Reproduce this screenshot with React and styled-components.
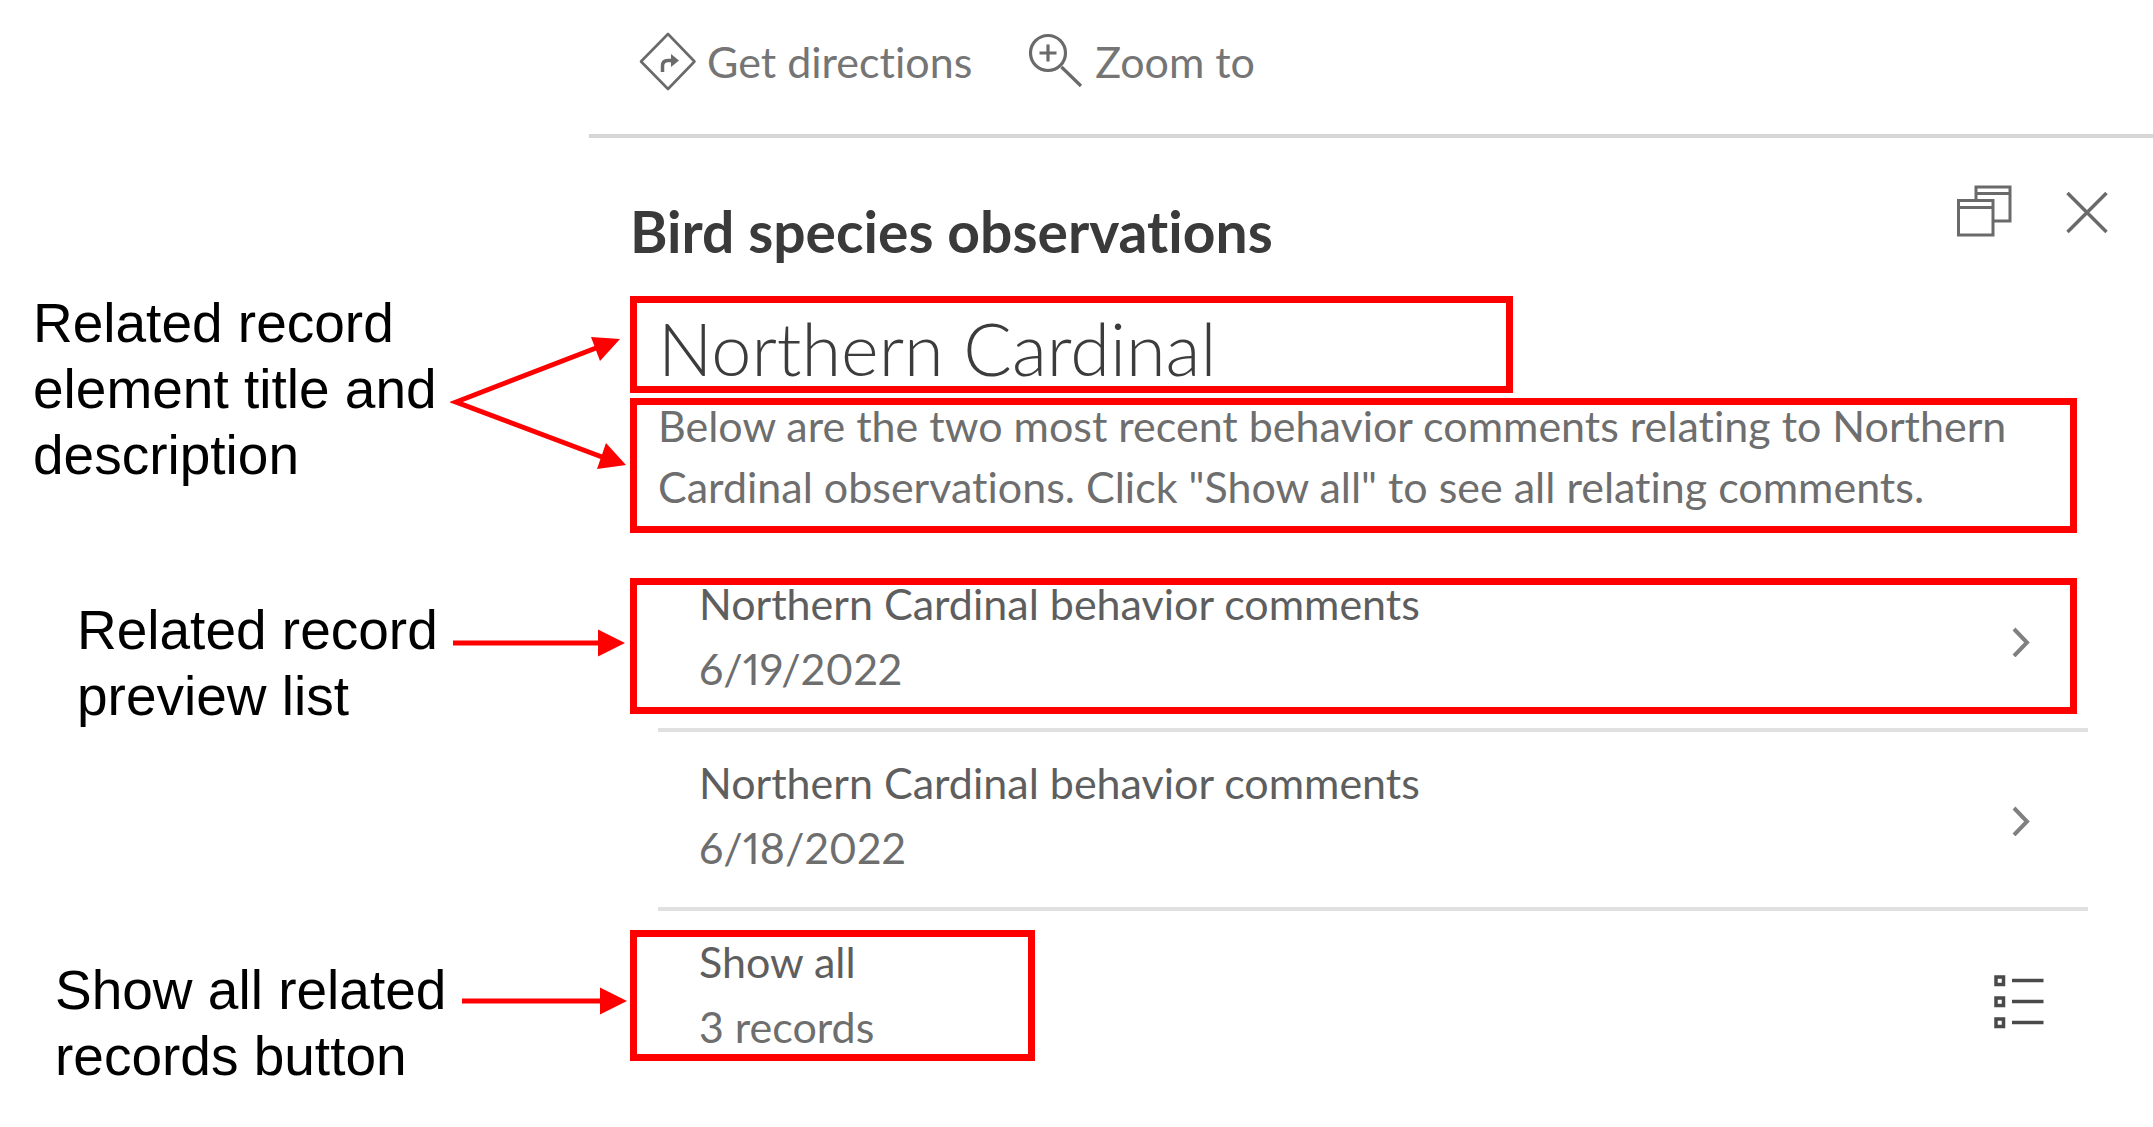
import React from 'react';
import styled, { createGlobalStyle } from 'styled-components';

const GlobalStyle = createGlobalStyle`
  * {
    box-sizing: border-box;
  }

  body {
    margin: 0;
    background: #fff;
    font-family: Lato, 'Open Sans', sans-serif;
    font-variant-ligatures: none;
  }

  h1, h2, p, ul {
    margin: 0;
    padding: 0;
  }

  svg {
    display: block;
    flex: none;
  }
`;

const Page = styled.div`
  display: grid;
  grid-template-columns: 589px 1fr;
`;

/* Callouts on the left */

const Notes = styled.aside`
  display: grid;
  grid-template-rows: 290px 307px 360px auto;
  font-family: 'Liberation Sans', Arial, sans-serif;
  font-size: 55px;
  line-height: 66px;
  color: #000;
`;

const Note = styled.div`
  position: relative;
  padding-left: ${({ $indent }) => $indent}px;
  white-space: nowrap;
`;

const Arrow = styled.svg`
  position: absolute;
  left: 450px;
  top: 1px;
  fill: #f00;
  stroke: #f00;
`;

/* Panel */

const Panel = styled.main`
  min-width: 0;
`;

const Toolbar = styled.div`
  display: flex;
  gap: 57px;
  height: 138px;
  padding: 31px 0 0 50px;
  border-bottom: 4px solid #d6d6d6;
`;

const ToolButton = styled.button`
  display: flex;
  align-items: center;
  gap: 10px;
  height: 60px;
  padding: 0;
  border: 0;
  background: none;
  font-family: inherit;
  font-variant-ligatures: inherit;
  font-size: 43px;
  color: #757575;
  white-space: nowrap;
`;

const Content = styled.div`
  padding: 0 76px 0 41px;
`;

const Header = styled.header`
  display: flex;
  justify-content: space-between;
  height: 158px;
`;

const Title = styled.h1`
  padding-top: 60px;
  font-size: 57px;
  line-height: 66px;
  font-weight: 700;
  color: #3a3a3a;
`;

const HeaderActions = styled.div`
  display: flex;
  align-items: flex-start;
  gap: 54px;
  padding-top: 46px;
  margin-right: -31px;
`;

const IconButton = styled.button`
  padding: 0;
  border: 0;
  background: none;
  color: #6a6a6a;
`;

const TitleFrame = styled.div`
  width: 61%;
  height: 97px;
  padding-left: 21px;
  border: 7px solid #f00;
`;

const ElementTitle = styled.h2`
  font-size: 72px;
  line-height: 90px;
  font-weight: 300;
  color: #3c3c3c;
`;

const TextFrame = styled.div`
  height: 135px;
  margin-top: 5px;
  padding-left: 21px;
  border: 7px solid #f00;
`;

const Description = styled.p`
  font-size: 43px;
  line-height: 61px;
  margin-top: -10px;
  color: #6e6e6e;
`;

const Records = styled.ul`
  list-style: none;
  margin: 20px -11px 0 28px;
`;

const RecordItem = styled.li`
  position: relative;
  border-bottom: ${({ $last }) => ($last ? '0' : '4px solid #e0e0e0')};
`;

const RecordButton = styled.button`
  display: flex;
  align-items: center;
  justify-content: space-between;
  width: 100%;
  height: 175px;
  padding: 2px ${({ $last }) => ($last ? 44 : 58)}px 0 41px;
  border: 0;
  background: none;
  font-family: inherit;
  font-variant-ligatures: inherit;
  font-variant-numeric: proportional-nums;
  font-size: 43px;
  line-height: 65px;
  text-align: left;
  color: #6e6e6e;
`;

const RecordText = styled.span`
  display: flex;
  flex-direction: column;
  padding-bottom: 12px;
`;

const RecordName = styled.span`
  color: #5e5e5e;
`;

const RowFrame = styled.div`
  position: absolute;
  left: -28px;
  right: 11px;
  top: 25px;
  height: 136px;
  border: 7px solid #f00;
  pointer-events: none;
`;

const ButtonFrame = styled(RowFrame)`
  right: auto;
  top: 19px;
  width: 405px;
  height: 131px;
`;

const DirectionsIcon = () => (
  <svg width="58" height="60" viewBox="0 0 58 60" fill="none" stroke="#6a6a6a" strokeWidth="2.6">
    <path d="M29 3 L55.500 30.500 L29 58 L2 30.500 Z" strokeLinejoin="round" />
    <path d="M23.500 41 V35 Q23.500 29.500 29 29.500 H36" strokeWidth="3.500" />
    <path d="M32 23 L40 29.500 L32 36 Z" fill="#6a6a6a" stroke="none" />
  </svg>
);

const ZoomIcon = () => (
  <svg width="56" height="60" viewBox="0 0 56 60" fill="none" stroke="#6a6a6a" strokeWidth="3.200">
    <circle cx="19" cy="22" r="17.500" />
    <path d="M10.500 22 H27.500 M19 13.500 V30.500 M32.500 36 L52 55" />
  </svg>
);

const WindowsIcon = () => (
  <svg width="56" height="54" viewBox="0 0 56 54" fill="none" stroke="#6a6a6a" strokeWidth="3">
    <path d="M20 16 V3 H54 V37 H37" />
    <path d="M20 9.500 H54" />
    <rect x="2.500" y="16.500" width="34.500" height="34.500" />
    <path d="M2.500 23.500 H37" />
  </svg>
);

const CloseIcon = () => (
  <svg width="42" height="54" viewBox="0 0 42 54" fill="none" stroke="#6a6a6a" strokeWidth="3.500">
    <path d="M1.500 9 L40.500 48 M40.500 9 L1.500 48" />
  </svg>
);

const ChevronIcon = () => (
  <svg width="18" height="30" viewBox="0 0 18 30" fill="none" stroke="#808080" strokeWidth="4">
    <path d="M2 2 L15 15.500 L2 29" />
  </svg>
);

const ListIcon = () => (
  <svg width="50" height="58" viewBox="0 -4 50 58" fill="none" stroke="#4a4a4a" strokeWidth="3.500">
    {[0, 21, 42].map((y) => (
      <g key={y}>
        <rect x="2" y={y + 2} width="7.500" height="7.500" />
        <path d={`M18 ${y + 5.5} H49.500`} />
      </g>
    ))}
  </svg>
);

const records = [
  { name: 'Northern Cardinal behavior comments', detail: '6/19/2022' },
  { name: 'Northern Cardinal behavior comments', detail: '6/18/2022' },
  { name: 'Show all', detail: '3 records', all: true },
];

const App = () => {
  return (
    <>
      <GlobalStyle />
      <Page>
        <Notes>
          <div />
          <Note $indent={33}>
            Related record
            <br />
            element title and
            <br />
            description
            <Arrow width="180" height="190">
              <path d="M146 57 L6 111 L152 166" fill="none" strokeWidth="5" />
              <path d="M141 46 L170 48 L150 70 Z M156 152 L176 174 L147 178 Z" stroke="none" />
            </Arrow>
          </Note>
          <Note $indent={77}>
            Related record
            <br />
            preview list
            <Arrow width="180" height="66">
              <path d="M3 45 H150" strokeWidth="5" />
              <path d="M148 31.500 L175 45 L148 58.500 Z" stroke="none" />
            </Arrow>
          </Note>
          <Note $indent={55}>
            Show all related
            <br />
            records button
            <Arrow width="180" height="66">
              <path d="M12 43 H152" strokeWidth="5" />
              <path d="M150 29.500 L177 43 L150 56.500 Z" stroke="none" />
            </Arrow>
          </Note>
        </Notes>

        <Panel>
          <Toolbar>
            <ToolButton>
              <DirectionsIcon />
              Get directions
            </ToolButton>
            <ToolButton>
              <ZoomIcon />
              Zoom to
            </ToolButton>
          </Toolbar>

          <Content>
            <Header>
              <Title>Bird species observations</Title>
              <HeaderActions>
                <IconButton aria-label="Dock">
                  <WindowsIcon />
                </IconButton>
                <IconButton aria-label="Close">
                  <CloseIcon />
                </IconButton>
              </HeaderActions>
            </Header>

            <TitleFrame>
              <ElementTitle>Northern Cardinal</ElementTitle>
            </TitleFrame>
            <TextFrame>
              <Description>
                Below are the two most recent behavior comments relating to Northern
                Cardinal observations. Click "Show all" to see all relating comments.
              </Description>
            </TextFrame>

            <Records>
              {records.map((record, i) => (
                <RecordItem key={record.detail} $last={record.all}>
                  <RecordButton $last={record.all}>
                    <RecordText>
                      <RecordName>{record.name}</RecordName>
                      <span>{record.detail}</span>
                    </RecordText>
                    {record.all ? <ListIcon /> : <ChevronIcon />}
                  </RecordButton>
                  {i === 0 && <RowFrame />}
                  {record.all && <ButtonFrame />}
                </RecordItem>
              ))}
            </Records>
          </Content>
        </Panel>
      </Page>
    </>
  );
};

export default App;
